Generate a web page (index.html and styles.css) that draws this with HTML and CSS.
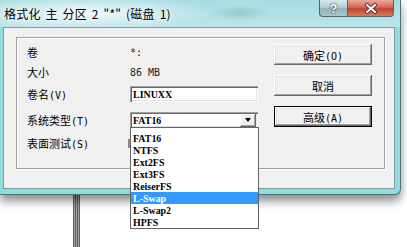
FILE: index.html
```html
<!DOCTYPE html>
<html lang="zh-CN">
<head>
    <meta charset="UTF-8">
    <title>格式化 主 分区 2</title>
    <link rel="stylesheet" href="styles.css">
</head>
<body>
    <div class="pole"></div>

    <div class="window">
        <div class="titlebar">
            <span class="title">格式化 主 分区 2 "*" (磁盘 1)</span>
            <div class="caption">
                <span class="cap-btn help">?</span>
                <span class="cap-btn close">
                    <svg width="14" height="11" viewBox="0 0 14 11">
                        <path d="M3 2 L11 9 M11 2 L3 9" stroke="#5a2a22" stroke-width="4" stroke-linecap="round"/>
                        <path d="M3 2 L11 9 M11 2 L3 9" stroke="#fff" stroke-width="2.2" stroke-linecap="round"/>
                    </svg>
                </span>
            </div>
        </div>

        <div class="client">
            <div class="panel">
                <div class="fields">
                    <div class="row r1">
                        <span class="label">卷</span>
                        <span class="value mono">*:</span>
                    </div>
                    <div class="row r2">
                        <span class="label">大小</span>
                        <span class="value mono">86 MB</span>
                    </div>
                    <div class="row r3">
                        <span class="label">卷名<span class="mono">(V)</span></span>
                        <div class="textbox"><span class="fs">LINUXX</span></div>
                    </div>
                    <div class="row r4">
                        <span class="label">系统类型<span class="mono">(T)</span></span>
                        <div class="combo">
                            <span class="fs">FAT16</span>
                            <span class="combo-arrow"></span>
                        </div>
                    </div>
                    <div class="row r5">
                        <span class="label">表面测试<span class="mono">(S)</span></span>
                        <span class="check"></span>
                    </div>
                </div>

                <div class="buttons">
                    <button class="btn">确定<span class="mono">(O)</span></button>
                    <button class="btn">取消</button>
                    <button class="btn default">高级<span class="mono">(A)</span></button>
                </div>
            </div>
        </div>
    </div>

    <ul class="dropdown">
        <li><span class="fs">FAT16</span></li>
        <li><span class="fs">NTFS</span></li>
        <li><span class="fs">Ext2FS</span></li>
        <li><span class="fs">Ext3FS</span></li>
        <li><span class="fs">ReiserFS</span></li>
        <li class="selected"><span class="fs">L-Swap</span></li>
        <li><span class="fs">L-Swap2</span></li>
        <li><span class="fs">HPFS</span></li>
    </ul>
</body>
</html>
```

FILE: styles.css
```css
body {
    margin: 0;
    width: 407px;
    height: 247px;
    overflow: hidden;
    position: relative;
    background: #fff;
    font-family: "Noto Sans CJK SC", sans-serif;
    color: #000;
}
.mono {
    font-family: "DejaVu Sans Mono", monospace;
    font-size: 10px;
}
/* narrow bold serif used for file system names */
.fs {
    display: inline-block;
    font: bold 10.8px/11px "Liberation Serif", serif;
    transform: scaleX(0.92);
    transform-origin: left center;
    white-space: pre;
}

/* something standing behind the dialog */
.pole {
    position: absolute;
    left: 73px;
    top: 180px;
    width: 7px;
    height: 67px;
    background: repeating-linear-gradient(to right, #5f5f5f 0 1px, #a0a0a0 1px 2px);
    box-shadow: -5px 0 0 -4px #e4e4e4;
}

.window {
    position: relative;
    width: 400px;
    background: #93dade;
    border-right: 1px solid #4f7478;
    border-bottom: 1px solid #4f7478;
    border-radius: 0 0 6px 0;
    box-shadow: 0 6px 10px rgba(0, 0, 0, 0.45);
    padding-bottom: 5px;
}
.titlebar {
    height: 27px;
    display: flex;
    align-items: flex-start;
    justify-content: space-between;
    background:
        radial-gradient(ellipse 130px 18px at 85px 13px, rgba(255, 255, 255, 0.8), rgba(255, 255, 255, 0)),
        radial-gradient(ellipse 30px 8px at 240px 13px, rgba(100, 140, 145, 0.3), rgba(100, 140, 145, 0)),
        linear-gradient(to bottom, #a9dde2, #b8e5e9);
}
.title {
    font-size: 12px;
    line-height: 12px;
    margin: 8px 0 0 4px;
    word-spacing: 2px;
    letter-spacing: 0.2px;
    text-shadow: 0 0 5px #fff, 0 0 8px #fff;
    white-space: pre;
}
.caption {
    display: flex;
    margin-right: 6px;
}
.cap-btn {
    height: 17px;
    box-sizing: border-box;
    border: 1px solid #51676b;
    border-top: none;
    display: flex;
    align-items: center;
    justify-content: center;
}
.help {
    width: 28px;
    border-right: none;
    border-radius: 0 0 0 4px;
    background: linear-gradient(to bottom, #d6e8eb, #b4cfd3 45%, #93b3b7 55%, #a9c8cc);
    color: #fff;
    font: bold 13px "Liberation Sans", sans-serif;
    text-shadow: 0 0 1px #333, 0 0 2px #333;
}
.close {
    width: 47px;
    border-radius: 0 0 4px 0;
    background: linear-gradient(to bottom, #e7ab9c, #d26a54 45%, #bf4630 55%, #d87b5f);
}

.client {
    margin: 0 5px 0 3px;
    height: 151px;
    background: #f0f0f0;
    border: 1px solid #7f9da1;
    padding: 9px 0 0 12px;
}
.panel {
    width: 367px;
    height: 130px;
    border: 1px solid #a0a0a0;
    box-shadow: inset 1px 1px 0 #fff, 1px 1px 0 #fff;
    display: flex;
}
.fields {
    padding-left: 10px;
    display: flex;
    flex-direction: column;
}
.row {
    height: 16px;
    display: flex;
    align-items: center;
    font-size: 11px;
}
.r1 { margin-top: 6px; }
.r2 { margin-top: 4px; }
.r3 { margin-top: 6px; }
.r4 { margin-top: 10px; }
.r5 { margin-top: 7px; }
.label {
    width: 103px;
}
.value {
    color: #222;
}
.textbox, .combo {
    width: 128px;
    height: 16px;
    box-sizing: border-box;
    background: #fff;
    box-shadow: inset 1px 1px 0 #a0a0a0, inset 2px 2px 0 #696969, inset -1px -1px 0 #fff, inset -2px -2px 0 #e3e3e3;
    display: flex;
    align-items: center;
    padding-left: 3px;
}
.combo {
    justify-content: space-between;
    padding-right: 2px;
}
.combo-arrow {
    width: 16px;
    height: 13px;
    margin-top: 1px;
    background: #f0f0f0;
    box-shadow: inset -1px -1px 0 #696969, inset 1px 1px 0 #fff, inset -2px -2px 0 #a0a0a0;
    display: flex;
    align-items: center;
    justify-content: center;
}
.combo-arrow::after {
    content: "";
    border-left: 3.5px solid transparent;
    border-right: 3.5px solid transparent;
    border-top: 4px solid #000;
    margin-bottom: 1px;
}
.check {
    width: 10px;
    height: 9px;
    margin-left: -2px;
    background: #8a8a8a;
}

.buttons {
    margin-left: auto;
    margin-right: 12px;
    padding-top: 6px;
    display: flex;
    flex-direction: column;
    gap: 10px;
}
.btn {
    width: 98px;
    height: 21px;
    padding: 0;
    border: none;
    background: #f0f0f0;
    box-shadow: inset -1px -1px 0 #696969, inset 1px 1px 0 #fff, inset -2px -2px 0 #a0a0a0, inset 2px 2px 0 #e3e3e3;
    font-family: "Noto Sans CJK SC", sans-serif;
    font-size: 11px;
    color: #000;
}
.btn.default {
    border: 1px solid #000;
}

.dropdown {
    position: absolute;
    left: 130px;
    top: 127px;
    width: 129px;
    height: 102px;
    box-sizing: border-box;
    margin: 0;
    padding: 4px 0 0;
    list-style: none;
    background: #fff;
    border: 1px solid #646464;
}
.dropdown li {
    height: 12px;
    padding-left: 2px;
    display: flex;
    align-items: center;
}
.dropdown li.selected {
    background: #3399ff;
    color: #fff;
}
```
